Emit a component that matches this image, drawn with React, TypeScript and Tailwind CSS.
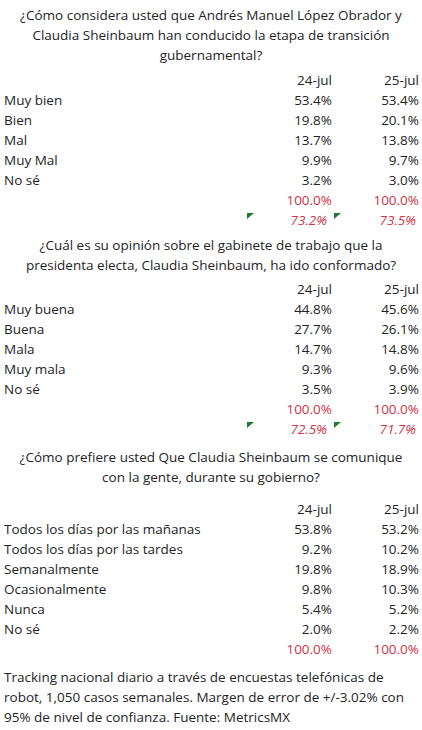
import React from "react";

type Row = { label: string; a: string; b: string };

const Tri = () => (
  <span className="absolute left-[2px] top-[3px] w-[7px] h-[6px] bg-[#1f7a2e] [clip-path:polygon(0_0,100%_0,0_100%)]" />
);

function Line({
  label,
  a,
  b,
  className = "",
  tri = false,
}: {
  label?: string;
  a: string;
  b: string;
  className?: string;
  tri?: boolean;
}) {
  return (
    <div className={`flex h-[20px] leading-[20px] pr-[3px] ${className}`}>
      <div className="flex-1 pl-[4px] whitespace-nowrap">{label ?? ""}</div>
      <div className="relative w-[87px] text-right">
        {tri && <Tri />}
        {a}
      </div>
      <div className="relative w-[87px] text-right">
        {tri && <Tri />}
        {b}
      </div>
    </div>
  );
}

function Table({
  rows,
  extra,
}: {
  rows: Row[];
  extra?: { a: string; b: string; italic: boolean };
}) {
  return (
    <div>
      <Line a="24-jul" b="25-jul" />
      {rows.map((r) => (
        <Line key={r.label} label={r.label} a={r.a} b={r.b} />
      ))}
      <Line a="100.0%" b="100.0%" className="text-[#cf3345]" />
      {extra && (
        <Line
          a={extra.a}
          b={extra.b}
          tri
          className={`text-[#cf3345] ${extra.italic ? "italic" : ""} [&>div:nth-child(2)]:pr-[5px] [&>div:nth-child(3)]:pr-[3px]`}
        />
      )}
    </div>
  );
}

export default function App() {
  return (
    <div className="w-[422px] h-[730px] bg-white text-[#242424] text-[13.5px] font-['Open_Sans',sans-serif] overflow-hidden">
      <p className="text-center leading-[20px] pt-[5px] pb-[5px]">
        ¿Cómo considera usted que Andrés Manuel López Obrador y
        <br />
        Claudia Sheinbaum han conducido la etapa de transición
        <br />
        gubernamental?
      </p>
      <Table
        rows={[
          { label: "Muy bien", a: "53.4%", b: "53.4%" },
          { label: "Bien", a: "19.8%", b: "20.1%" },
          { label: "Mal", a: "13.7%", b: "13.8%" },
          { label: "Muy Mal", a: "9.9%", b: "9.7%" },
          { label: "No sé", a: "3.2%", b: "3.0%" },
        ]}
        extra={{ a: "73.2%", b: "73.5%", italic: true }}
      />
      <p className="text-center leading-[20px] pt-[5px] pb-[4px]">
        ¿Cuál es su opinión sobre el gabinete de trabajo que la
        <br />
        presidenta electa, Claudia Sheinbaum, ha ido conformado?
      </p>
      <Table
        rows={[
          { label: "Muy buena", a: "44.8%", b: "45.6%" },
          { label: "Buena", a: "27.7%", b: "26.1%" },
          { label: "Mala", a: "14.7%", b: "14.8%" },
          { label: "Muy mala", a: "9.3%", b: "9.6%" },
          { label: "No sé", a: "3.5%", b: "3.9%" },
        ]}
        extra={{ a: "72.5%", b: "71.7%", italic: true }}
      />
      <p className="text-center leading-[20px] pt-[8px] pb-[12px]">
        ¿Cómo prefiere usted Que Claudia Sheinbaum se comunique
        <br />
        con la gente, durante su gobierno?
      </p>
      <Table
        rows={[
          { label: "Todos los días por las mañanas", a: "53.8%", b: "53.2%" },
          { label: "Todos los días por las tardes", a: "9.2%", b: "10.2%" },
          { label: "Semanalmente", a: "19.8%", b: "18.9%" },
          { label: "Ocasionalmente", a: "9.8%", b: "10.3%" },
          { label: "Nunca", a: "5.4%", b: "5.2%" },
          { label: "No sé", a: "2.0%", b: "2.2%" },
        ]}
      />
      <p className="leading-[20px] pl-[4px] pt-[8px]">
        Tracking nacional diario a través de encuestas telefónicas de
        <br />
        robot, 1,050 casos semanales. Margen de error de +/-3.02% con
        <br />
        95% de nivel de confianza. Fuente: MetricsMX
      </p>
    </div>
  );
}
